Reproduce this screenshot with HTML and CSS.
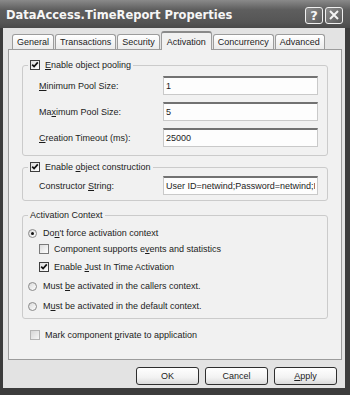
FILE: index.html
```html
<!DOCTYPE html>
<html lang="en">
<head>
  <meta charset="UTF-8">
  <meta name="viewport" content="width=device-width, initial-scale=1.0">
  <title>DataAccess.TimeReport Properties</title>
  <link rel="stylesheet" href="styles.css">
</head>
<body>

  <div class="window">
    <div class="titlebar">
      <span class="title">DataAccess.TimeReport Properties</span>
      <div class="caption-buttons">
        <span class="cap-btn help">?</span>
        <span class="cap-btn">
          <svg width="10" height="10" viewBox="0 0 10 10"><path d="M1 1 L9 9 M9 1 L1 9" stroke="#f4f4f4" stroke-width="2" fill="none"/></svg>
        </span>
      </div>
    </div>

    <div class="client">
      <div class="tabs">
        <span class="tab">General</span>
        <span class="tab">Transactions</span>
        <span class="tab">Security</span>
        <span class="tab active">Activation</span>
        <span class="tab">Concurrency</span>
        <span class="tab">Advanced</span>
      </div>

      <div class="page">
        <fieldset class="group pooling">
          <legend>
            <span class="check"><svg viewBox="0 0 8 8"><path d="M1.2 3.6 L3.1 5.6 L6.8 1.4" stroke="#111" stroke-width="1.7" fill="none"/></svg></span>
            <span><u>E</u>nable object pooling</span>
          </legend>
          <div class="field first">
            <label><u>M</u>inimum Pool Size:</label>
            <input type="text" value="1" readonly>
          </div>
          <div class="field">
            <label>Ma<u>x</u>imum Pool Size:</label>
            <input type="text" value="5" readonly>
          </div>
          <div class="field">
            <label><u>C</u>reation Timeout (ms):</label>
            <input type="text" value="25000" readonly>
          </div>
        </fieldset>

        <fieldset class="group construction">
          <legend>
            <span class="check"><svg viewBox="0 0 8 8"><path d="M1.2 3.6 L3.1 5.6 L6.8 1.4" stroke="#111" stroke-width="1.7" fill="none"/></svg></span>
            <span>Enable <u>o</u>bject construction</span>
          </legend>
          <div class="field first">
            <label>Constructor <u>S</u>tring:</label>
            <input type="text" value="User ID=netwind;Password=netwind;Initial Catalog=TimeReport" readonly>
          </div>
        </fieldset>

        <fieldset class="group context">
          <legend><span class="legend-text">Activation Context</span></legend>
          <div class="opt radio-row first">
            <span class="radio on"></span>
            <span>Do<u>n</u>'t force activation context</span>
          </div>
          <div class="opt sub">
            <span class="check off"></span>
            <span>Component supports e<u>v</u>ents and statistics</span>
          </div>
          <div class="opt sub jit">
            <span class="check"><svg viewBox="0 0 8 8"><path d="M1.2 3.6 L3.1 5.6 L6.8 1.4" stroke="#111" stroke-width="1.7" fill="none"/></svg></span>
            <span>Enable <u>J</u>ust In Time Activation</span>
          </div>
          <div class="opt radio-row callers">
            <span class="radio"></span>
            <span>Must <u>b</u>e activated in the callers context.</span>
          </div>
          <div class="opt radio-row default">
            <span class="radio"></span>
            <span>M<u>u</u>st be activated in the default context.</span>
          </div>
        </fieldset>

        <div class="opt private">
          <span class="check off light"></span>
          <span>Mark component <u>p</u>rivate to application</span>
        </div>
      </div>

      <div class="buttons">
        <button>OK</button>
        <button>Cancel</button>
        <button><u>A</u>pply</button>
      </div>
    </div>
  </div>

</body>
</html>
```

FILE: styles.css
```css
body {
  margin: 0;
  font-family: "Liberation Sans", Arial, sans-serif;
  font-size: 9px;
  color: #1c1c1c;
  background-color: #ffffff;
}

.window {
  width: 350px;
  height: 395px;
  box-sizing: border-box;
  background-color: #e3e3e3;
  border: solid #3c3c3c;
  border-width: 0 5px 7px 3px;
  display: flex;
  flex-direction: column;
}

/* barra de titulo */
.titlebar {
  height: 28px;
  flex: none;
  margin-left: -3px;
  margin-right: -5px;
  padding: 0 7px 0 6px;
  display: flex;
  align-items: center;
  justify-content: space-between;
  background: linear-gradient(#8a8a8a, #5e5e5e 35%, #555555 80%, #4a4a4a);
}

.title {
  font-family: "DejaVu Sans", Verdana, sans-serif;
  font-weight: bold;
  font-size: 11.5px;
  color: #f6f6f6;
  margin-top: 2px;
}

.caption-buttons {
  display: flex;
  gap: 2px;
  margin-top: 2px;
}

.cap-btn {
  width: 18px;
  height: 17px;
  box-sizing: border-box;
  border: 1px solid #f0f0f0;
  border-radius: 3px;
  background: linear-gradient(135deg, #8c8c8c, #5a5a5a);
  display: flex;
  align-items: center;
  justify-content: center;
  color: #f6f6f6;
}

.cap-btn.help {
  font-family: "DejaVu Sans", Verdana, sans-serif;
  font-weight: bold;
  font-size: 13px;
}

.client {
  flex: 1;
  padding: 3px 3px 0 5px;
  display: flex;
  flex-direction: column;
}

/* abas */
.tabs {
  display: flex;
  align-items: flex-end;
  height: 18px;
  padding-left: 4px;
  gap: 1px;
  position: relative;
  z-index: 1;
}

.tab {
  height: 15px;
  box-sizing: border-box;
  padding: 0 4px;
  line-height: 14px;
  border: 1px solid #9c9c9c;
  border-bottom: none;
  border-radius: 3px 3px 0 0;
  background: linear-gradient(#ffffff, #ebebeb);
}

.tab.active {
  height: 19px;
  margin-bottom: -1px;
  padding: 2px 5px 0;
  border-top: 2px solid #8a8a8a;
  background: #f1f1f1;
}

.page {
  height: 311px;
  box-sizing: border-box;
  border: 1px solid #9c9c9c;
  background-color: #f1f1f1;
  padding: 9px 13px 0 13px;
}

/* grupos */
.group {
  margin: 0;
  border: 1px solid #cbcbcb;
  border-radius: 3px;
  padding: 0 9px 8px 16px;
}

.group legend {
  margin-left: -11px;
  padding: 0 2px;
  height: 12px;
  display: flex;
  align-items: center;
  gap: 5px;
}

.group.construction {
  margin-top: 5px;
  padding-bottom: 5px;
}

.group.context {
  margin-top: 8px;
  padding-bottom: 4px;
}

.field {
  height: 19px;
  margin-top: 7px;
  display: flex;
  align-items: center;
  justify-content: space-between;
}

.pooling .field.first {
  margin-top: 5px;
}

.construction .field.first {
  margin-top: 3px;
}

.field input {
  width: 155px;
  height: 19px;
  box-sizing: border-box;
  margin: 0;
  padding: 0 2px;
  font-family: "Liberation Sans", Arial, sans-serif;
  font-size: 9px;
  color: #1c1c1c;
  background-color: #fdfdfd;
  border: 1px solid #c9c9c9;
  border-top: 2px solid #727272;
  outline: none;
}

/* caixas e radios */
.check {
  width: 10px;
  height: 10px;
  box-sizing: border-box;
  border: 1px solid #3e3e3e;
  background: linear-gradient(135deg, #dcdcdc, #ffffff);
  display: inline-flex;
  align-items: center;
  justify-content: center;
  flex: none;
}

.check svg {
  width: 8px;
  height: 8px;
}

.check.off {
  border-color: #7a7a7a;
}

.check.light {
  border-color: #b4b4b4;
  background: linear-gradient(135deg, #d6d6d6, #f6f6f6);
}

.radio {
  width: 9px;
  height: 9px;
  box-sizing: border-box;
  border: 1px solid #8a8a8a;
  border-radius: 50%;
  background: linear-gradient(135deg, #d8d8d8, #ffffff);
  display: inline-flex;
  align-items: center;
  justify-content: center;
  flex: none;
}

.radio.on::after {
  content: "";
  width: 3px;
  height: 3px;
  border-radius: 50%;
  background-color: #111111;
}

.opt {
  height: 16px;
  display: flex;
  align-items: center;
}

.radio-row {
  margin-left: -11px;
  gap: 6px;
}

.sub {
  gap: 5px;
}

.opt.first {
  margin-top: 4px;
}

.opt.jit {
  margin-top: 2px;
}

.opt.callers {
  margin-top: 3px;
}

.opt.default {
  margin-top: 4px;
}

.opt.private {
  margin-top: 8px;
  margin-left: 8px;
  gap: 5px;
}

/* botoes */
.buttons {
  display: flex;
  justify-content: flex-end;
  gap: 6px;
  padding-right: 5px;
  margin-top: 7px;
}

.buttons button {
  width: 63px;
  height: 18px;
  margin: 0;
  padding: 0;
  font-family: "Liberation Sans", Arial, sans-serif;
  font-size: 9px;
  color: #1c1c1c;
  border: 1px solid #2e2e2e;
  border-radius: 3px;
  background: linear-gradient(#ffffff, #f2f2f2 60%, #dadada);
}
```
